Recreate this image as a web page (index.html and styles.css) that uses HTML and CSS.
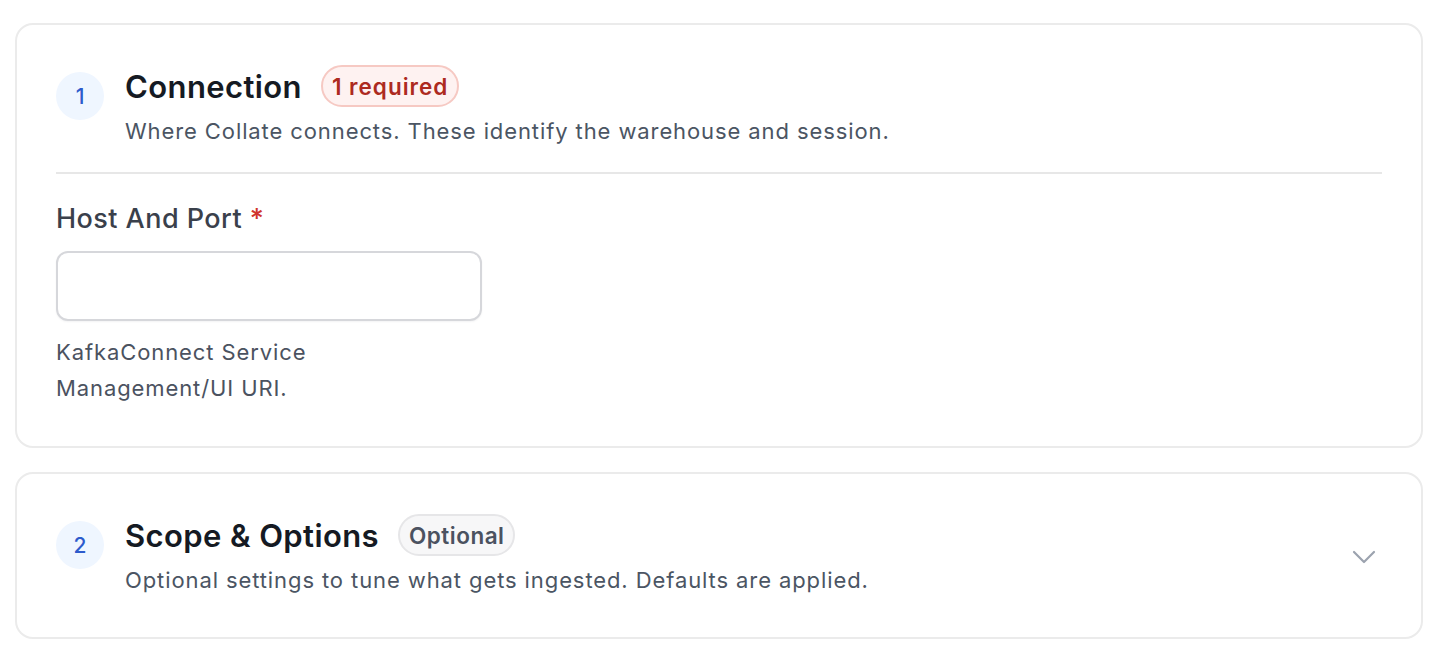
FILE: index.html
```html
<!DOCTYPE html>
<html>
<head>
<meta charset="utf-8">
<link rel="stylesheet" href="styles.css">
</head>
<body>
<main class="page">
  <section class="card">
    <div class="head head-open">
      <div class="step">1</div>
      <div class="head-text">
        <div class="title-row">
          <h2 class="title">Connection</h2>
          <span class="badge badge-req">1 required</span>
        </div>
        <p class="sub">Where Collate connects. These identify the warehouse and session.</p>
      </div>
    </div>
    <div class="field">
      <label class="label">Host And Port <span class="star">*</span></label>
      <input class="input" type="text">
      <p class="help">KafkaConnect Service Management/UI URI.</p>
    </div>
  </section>
  <section class="card card-collapsed">
    <div class="head">
      <div class="step">2</div>
      <div class="head-text">
        <div class="title-row">
          <h2 class="title">Scope &amp; Options</h2>
          <span class="badge badge-opt">Optional</span>
        </div>
        <p class="sub">Optional settings to tune what gets ingested. Defaults are applied.</p>
      </div>
      <svg class="chev" width="24" height="14" viewBox="0 0 24 14" fill="none" stroke="#9ca3af" stroke-width="2.2" stroke-linecap="round" stroke-linejoin="round"><path d="M2 2l10 10 10-10"/></svg>
    </div>
  </section>
</main>
</body>
</html>
```
FILE: styles.css
```css
* { box-sizing: border-box; }
html, body { margin: 0; padding: 0; background: #ffffff; }
body {
  font-family: Inter, "Noto Sans", sans-serif;
  font-optical-sizing: none;
  color: #111827;
}
.page {
  padding: 23px 19px 0 15px;
  display: flex;
  flex-direction: column;
  gap: 24px;
}
.card {
  border: 2px solid #ebebeb;
  border-radius: 18px;
  padding: 40px 39px 40px 39px;
  background: #fff;
}
.card-collapsed { padding-bottom: 43px; }
.head {
  display: flex;
  align-items: center;
  gap: 21px;
}
.head-open {
  align-items: flex-start;
  padding-bottom: 27px;
  border-bottom: 2px solid #e7e7e7;
}
.step {
  flex: none;
  width: 48px;
  height: 48px;
  border-radius: 50%;
  background: #eff6ff;
  color: #2d5bcc;
  font-size: 21px;
  font-weight: 500;
  display: flex;
  align-items: center;
  justify-content: center;
  margin-top: 7px;
  align-self: flex-start;
}
.head-text { flex: 1; }
.title-row {
  display: flex;
  align-items: center;
  gap: 19px;
  height: 42px;
}
.title {
  margin: 0;
  font-size: 31px;
  font-weight: 600;
  letter-spacing: 0.4px;
  color: #151a23;
}
.badge {
  height: 42px;
  display: inline-flex;
  align-items: center;
  padding: 0 9px;
  border-radius: 21px;
  font-size: 22.5px;
  font-weight: 600;
  letter-spacing: 1px;
}
.badge-req {
  background: #fef2f1;
  border: 2px solid #f6c9c3;
  color: #ad2a1f;
}
.badge-opt {
  background: #f7f7f8;
  border: 2px solid #e6e6e8;
  color: #4b5260;
  letter-spacing: 0.5px;
}
.sub {
  margin: 10px 0 0;
  font-size: 22px;
  line-height: 28px;
  letter-spacing: 0.9px;
  color: #4b5563;
}
.chev { flex: none; margin-right: 6px; margin-top: 6px; }
.field {
  margin-top: 29px;
  width: 426px;
}
.label {
  display: block;
  font-size: 27px;
  line-height: 32px;
  font-weight: 500;
  letter-spacing: 0.45px;
  color: #3a404b;
}
.star { color: #d0342c; }
.input {
  display: block;
  margin-top: 16px;
  width: 426px;
  height: 70px;
  border: 2px solid #d6d7db;
  border-radius: 12px;
  background: #fff;
  box-shadow: 0 1px 2px rgba(16,24,40,0.05);
  outline: none;
}
.help {
  margin: 13px 0 0;
  font-size: 22px;
  line-height: 36px;
  letter-spacing: 0.9px;
  color: #4b5260;
}
```
